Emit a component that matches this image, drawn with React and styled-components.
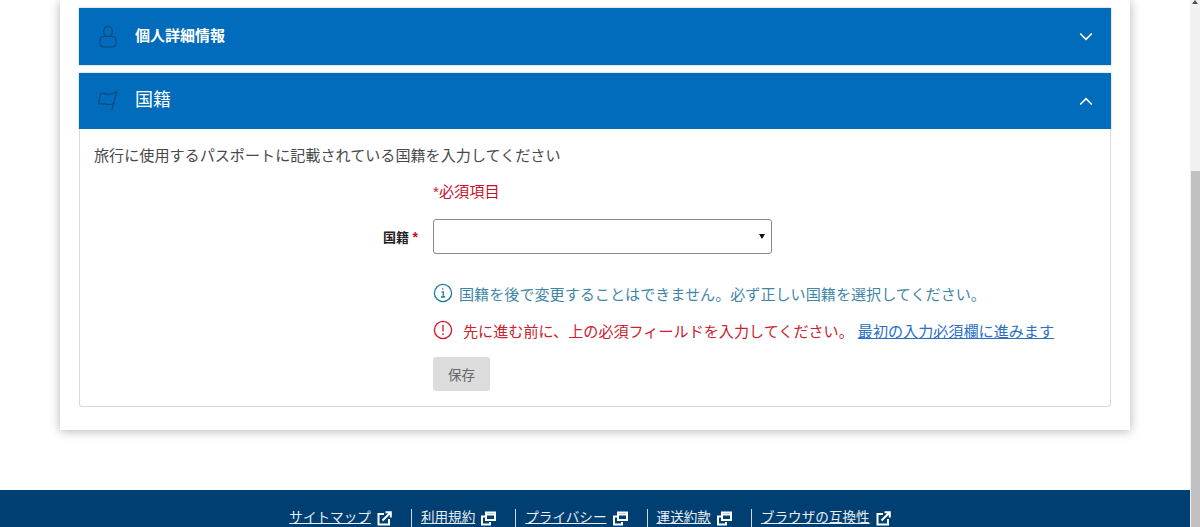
import styled, { createGlobalStyle } from "styled-components"
import { useState } from "react"

const Global = createGlobalStyle`
html, body {
    margin: 0;
    height: 527px;
    overflow: hidden;
    background: #fff;
}
body, button, select {
    font-family: "Liberation Sans", Arial, "Noto Sans CJK JP", sans-serif;
}
`

const footerLinks = [
    { label: "サイトマップ", icon: "external" },
    { label: "利用規約", icon: "windows" },
    { label: "プライバシー", icon: "windows" },
    { label: "運送約款", icon: "windows" },
    { label: "ブラウザの互換性", icon: "external" },
]

function ExternalIcon() {
    return (
        <FooterIcon viewBox="0 0 15 15">
            <path d="M7 3H1.5v10.5H12V8" fill="none" stroke="#fff" strokeWidth="2" />
            <path d="M5.5 9.5 13 2M8.5 1.2h5.3v5.3" fill="none" stroke="#fff" strokeWidth="2" />
        </FooterIcon>
    )
}

function WindowsIcon() {
    return (
        <FooterIcon viewBox="0 0 15 15">
            <path d="M5 1.5h9v7.5H5z" fill="none" stroke="#fff" strokeWidth="2" />
            <path d="M5 3.5h9" stroke="#fff" strokeWidth="2" />
            <path d="M4 5.5H1v8h8V11" fill="none" stroke="#fff" strokeWidth="2" />
        </FooterIcon>
    )
}

export default function App() {
    const [nationality, setNationality] = useState("")

    return (
        <Page>
            <Global />
            <Main>
                <Card>
                    <Section>
                        <SectionHeader $small>
                            <HeaderIcon viewBox="0 0 20 22">
                                <ellipse cx="10" cy="5.500" rx="4.400" ry="5" />
                                <path d="M5.500 10.500h9c2.200 0 3.500 1.800 3.500 4.500v2c0 2.300-1.300 4-3.500 4h-9C3.300 21 2 19.300 2 17v-2c0-2.700 1.300-4.500 3.500-4.500z" />
                            </HeaderIcon>
                            <HeaderTitle $small>個人詳細情報</HeaderTitle>
                            <Chevron viewBox="0 0 14 9">
                                <path d="M1.200 1.500 7 7.300l5.800-5.800" />
                            </Chevron>
                        </SectionHeader>
                    </Section>
                    <Section>
                        <SectionHeader>
                            <HeaderIcon viewBox="0 0 20 22">
                                <path d="M2.700 3.300c2.300-1 4.200.8 6.800 1 3.400.3 6-.8 9.200-2.600L13.700 20" />
                                <path d="M16.500 13.500c-2.500.8-4.700 1.200-7 .9-3-.4-5.700-1.100-9.200-.4L2.700 3.300" />
                            </HeaderIcon>
                            <HeaderTitle>国籍</HeaderTitle>
                            <Chevron viewBox="0 0 14 9">
                                <path d="M1.200 7.500 7 1.700l5.800 5.800" />
                            </Chevron>
                        </SectionHeader>
                        <SectionBody>
                            <Intro>旅行に使用するパスポートに記載されている国籍を入力してください</Intro>
                            <FormArea>
                                <Required>*必須項目</Required>
                                <FieldRow>
                                    <FieldLabel htmlFor="nationality">国籍 <Star>*</Star></FieldLabel>
                                    <SelectBox id="nationality" value={nationality} onChange={(e) => setNationality(e.target.value)}>
                                        <option value=""></option>
                                    </SelectBox>
                                </FieldRow>
                                <Message $tone="info">
                                    <MessageIcon viewBox="0 0 20 20" $tone="info">
                                        <circle cx="10" cy="10" r="8.600" />
                                        <path d="M8.500 8.800h1.800v5M8 14h4.200M9.800 5.200v1.400" />
                                    </MessageIcon>
                                    国籍を後で変更することはできません。必ず正しい国籍を選択してください。
                                </Message>
                                <Message $tone="error">
                                    <MessageIcon viewBox="0 0 20 20" $tone="error">
                                        <circle cx="10" cy="10" r="8.600" />
                                        <path d="M10 4.800v6.600M10 13.200v1.800" />
                                    </MessageIcon>
                                    <ErrorText>先に進む前に、上の必須フィールドを入力してください。</ErrorText>
                                    <JumpLink href="#nationality">最初の入力必須欄に進みます</JumpLink>
                                </Message>
                                <SaveButton type="button">保存</SaveButton>
                            </FormArea>
                        </SectionBody>
                    </Section>
                </Card>
            </Main>
            <Footer>
                {footerLinks.map((item) => (
                    <FooterItem key={item.label}>
                        <FooterLink href="#">{item.label}</FooterLink>
                        {item.icon === "external" ? <ExternalIcon /> : <WindowsIcon />}
                    </FooterItem>
                ))}
            </Footer>
            <Scrollbar>
                <ScrollArrow />
                <ScrollThumb />
            </Scrollbar>
        </Page>
    )
}

const Page = styled.div`
position: relative;
height: 527px;
overflow: hidden;
padding-right: 10px;
`

const Main = styled.main`
height: 490px;
padding: 0 60px;
`

const Card = styled.div`
height: 430px;
box-sizing: border-box;
padding: 8px 19px 0;
background: #fff;
box-shadow: 0 1px 10px rgba(0, 0, 0, 0.3);
`

const Section = styled.section`
margin-bottom: 8px;
`

const SectionHeader = styled.header`
display: flex;
align-items: center;
height: ${(p) => (p.$small ? "57px" : "56px")};
padding: 0 18px 0 19px;
background: #006cbb;
color: #fff;
box-shadow: 0 0 2px rgba(0, 0, 0, 0.3);
`

const HeaderIcon = styled.svg`
width: 20px;
height: 22px;
flex: none;
fill: none;
stroke: #0b4a7f;
stroke-width: 1.200;
`

const HeaderTitle = styled.h2`
flex: 1;
margin: 0 0 ${(p) => (p.$small ? "2px" : "2px")} 17px;
font-size: ${(p) => (p.$small ? "15px" : "18px")};
font-weight: ${(p) => (p.$small ? "bold" : "normal")};
line-height: 20px;
`

const Chevron = styled.svg`
width: 14px;
height: 9px;
fill: none;
stroke: #fff;
stroke-width: 1.700;
`

const SectionBody = styled.div`
height: 278px;
box-sizing: border-box;
padding: 18px 14px 0;
border: 1px solid #d9d9d9;
border-top: 0;
border-radius: 0 0 3px 3px;
background: #fff;
`

const Intro = styled.p`
margin: 0;
font-size: 15.100px;
line-height: 18px;
color: #4a4a4a;
`

const FormArea = styled.div`
margin-left: 339px;
padding-top: 17px;
`

const Required = styled.div`
height: 37px;
font-size: 15.200px;
line-height: 20px;
color: #c8102e;
`

// wraps the select so the small native-looking arrow can sit over it
const FieldRow = styled.div`
position: relative;
width: 339px;
margin-bottom: 29px;
&::after {
    content: "";
    position: absolute;
    right: 7px;
    top: 15px;
    border: 3px solid transparent;
    border-top: 5px solid #111;
    border-bottom: 0;
    pointer-events: none;
}
`

const FieldLabel = styled.label`
position: absolute;
right: 100%;
top: 10px;
margin-right: 15px;
font-size: 13px;
font-weight: bold;
line-height: 16px;
white-space: nowrap;
color: #222;
`

const Star = styled.span`
color: #c8102e;
font-size: 14px;
`

const SelectBox = styled.select`
display: block;
width: 339px;
height: 35px;
box-sizing: border-box;
padding: 0 6px;
border: 1px solid #8a8a8a;
border-radius: 3px;
background: #fff;
appearance: none;
`

const toneColor = { info: "#1e7a9e", error: "#d7102a" }

const Message = styled.div`
display: flex;
align-items: center;
height: 20px;
margin-bottom: 17px;
font-size: 15.100px;
color: ${(p) => (p.$tone === "info" ? "#3f86a6" : "#c8232f")};
white-space: nowrap;
`

const MessageIcon = styled.svg`
width: 20px;
height: 20px;
flex: none;
margin-right: ${(p) => (p.$tone === "info" ? "6px" : "10px")};
fill: none;
stroke: ${(p) => toneColor[p.$tone]};
stroke-width: 1.300;
`

const ErrorText = styled.span`
margin-right: 4px;
`

const JumpLink = styled.a`
color: #2a6fc4;
text-decoration: underline;
`

const SaveButton = styled.button`
display: block;
width: 57px;
height: 34px;
padding: 0;
border: 0;
border-radius: 3px;
background: #dcdcdc;
color: #666;
font-size: 13.500px;
`

const Footer = styled.footer`
display: flex;
justify-content: center;
height: 37px;
padding-top: 19px;
background: #003f72;
`

const FooterItem = styled.div`
display: flex;
align-items: center;
height: 18px;
padding: 0 19px 0 9px;
border-left: 1px solid #cfd8e2;
&:first-child {
    border-left: 0;
}
`

const FooterLink = styled.a`
color: #e8edf2;
font-size: 13.600px;
line-height: 18px;
text-decoration: underline;
`

const FooterIcon = styled.svg`
width: 15px;
height: 15px;
margin-left: 6px;
flex: none;
`

const Scrollbar = styled.div`
position: absolute;
top: 0;
right: 0;
bottom: 0;
width: 10px;
background: #f1f1f1;
`

const ScrollArrow = styled.div`
width: 0;
margin: 0 auto;
border: 3px solid transparent;
border-top: 0;
border-bottom: 4px solid #505050;
`

const ScrollThumb = styled.div`
position: absolute;
top: 171px;
left: 1px;
right: 0;
bottom: 0;
background: #c1c1c1;
`
